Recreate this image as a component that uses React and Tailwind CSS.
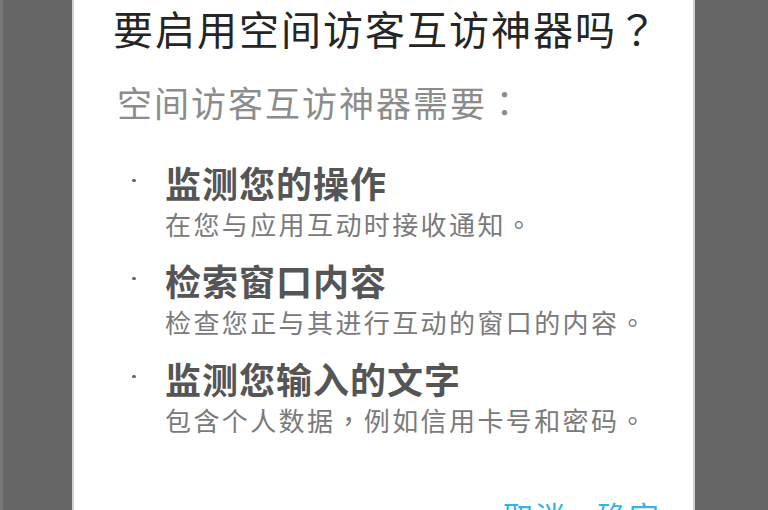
const tc = { fontFamily: '"Noto Sans CJK TC", sans-serif' }

const items = [
  { title: '监测您的操作', desc: <>在您与应用互动时接收通知<span style={tc}>。</span></> },
  { title: '检索窗口内容', desc: <>检查您正与其进行互动的窗口的内容<span style={tc}>。</span></> },
  { title: '监测您输入的文字', desc: <>包含个人数据<span style={tc}>，</span>例如信用卡号和密码<span style={tc}>。</span></> },
]

function PermissionItem({ title, desc }) {
  return (
    <div className="flex">
      <div className="w-[91px] flex justify-end pr-[29px] pt-[15px]">
        <span className="block w-[4px] h-[3px] rounded-full bg-[#666]" />
      </div>
      <div>
        <p className="text-[36px] leading-[36px] font-bold tracking-[1px] text-[#555] whitespace-nowrap">{title}</p>
        <p className="mt-[11px] text-[26px] leading-[26px] tracking-[2.4px] text-[#7a7a7a] whitespace-nowrap">{desc}</p>
      </div>
    </div>
  )
}

export default function App() {
  return (
    <div
      className="flex w-[768px] h-[510px] overflow-hidden bg-[#666]"
      style={{ fontFamily: '"Noto Sans CJK SC", "Noto Sans", sans-serif' }}
    >
      <div className="w-[3px] shrink-0 bg-[#787878]" />
      <div className="w-[69px] shrink-0" />
      <div className="w-[623px] shrink-0 bg-white border-x-2 border-[#d0d0d0]">
        <h1 className="mt-[8px] pl-[39px] text-[40px] leading-[40px] tracking-[2px] text-[#252525] font-normal whitespace-nowrap">
          要启用空间访客互访神器吗<span style={tc}>？</span>
        </h1>
        <p className="mt-[36px] pl-[43px] text-[35px] leading-[35px] tracking-[2px] text-[#8c8c8c] whitespace-nowrap">
          空间访客互访神器需要<span style={tc}>：</span>
        </p>
        <div className="mt-[45px] flex flex-col gap-[25px]">
          {items.map((item) => (
            <PermissionItem key={item.title} title={item.title} desc={item.desc} />
          ))}
        </div>
        <div className="mt-[67px] flex justify-end gap-[30px] pr-[32px] text-[30px] leading-[30px] tracking-[2px] text-[#33b5e5]">
          <span>取消</span>
          <span>确定</span>
        </div>
      </div>
      <div className="flex-1" />
    </div>
  )
}
